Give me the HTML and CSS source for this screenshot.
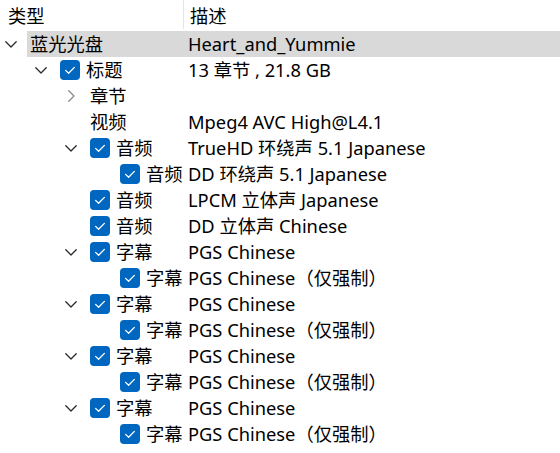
FILE: index.html
```html
<!DOCTYPE html>
<html lang="zh-CN">
<head>
<meta charset="utf-8">
<title>Tree</title>
<link rel="stylesheet" href="styles.css">
</head>
<body>
<div class="tree">
  <div class="header">
    <div class="hcell hname">类型</div>
    <div class="hcell hdesc">描述</div>
  </div>

  <div class="row selected">
    <div class="name lvl0"><span class="exp"><svg class="down" viewBox="0 0 12 7"><path d="M0.8 0.8 L6 6 L11.2 0.8"/></svg></span><span class="label">蓝光光盘</span></div>
    <div class="desc">Heart_and_Yummie</div>
  </div>
  <div class="row">
    <div class="name lvl1"><span class="exp"><svg class="down" viewBox="0 0 12 7"><path d="M0.8 0.8 L6 6 L11.2 0.8"/></svg></span><span class="cb"><svg viewBox="0 0 20 20"><path d="M5.6 10.4 L8.6 13.3 L14.4 7.4"/></svg></span><span class="label">标题</span></div>
    <div class="desc">13 章节 , 21.8 GB</div>
  </div>
  <div class="row">
    <div class="name lvl2"><span class="exp"><svg class="right" viewBox="0 0 7 12"><path d="M0.8 0.8 L6 6 L0.8 11.2"/></svg></span><span class="label">章节</span></div>
    <div class="desc"></div>
  </div>
  <div class="row">
    <div class="name lvl2"><span class="exp"></span><span class="label">视频</span></div>
    <div class="desc">Mpeg4 AVC High@L4.1</div>
  </div>
  <div class="row">
    <div class="name lvl2"><span class="exp"><svg class="down" viewBox="0 0 12 7"><path d="M0.8 0.8 L6 6 L11.2 0.8"/></svg></span><span class="cb"><svg viewBox="0 0 20 20"><path d="M5.6 10.4 L8.6 13.3 L14.4 7.4"/></svg></span><span class="label">音频</span></div>
    <div class="desc">TrueHD 环绕声 5.1 Japanese</div>
  </div>
  <div class="row">
    <div class="name lvl3"><span class="exp"></span><span class="cb"><svg viewBox="0 0 20 20"><path d="M5.6 10.4 L8.6 13.3 L14.4 7.4"/></svg></span><span class="label">音频</span></div>
    <div class="desc">DD 环绕声 5.1 Japanese</div>
  </div>
  <div class="row">
    <div class="name lvl2"><span class="exp"></span><span class="cb"><svg viewBox="0 0 20 20"><path d="M5.6 10.4 L8.6 13.3 L14.4 7.4"/></svg></span><span class="label">音频</span></div>
    <div class="desc">LPCM 立体声 Japanese</div>
  </div>
  <div class="row">
    <div class="name lvl2"><span class="exp"></span><span class="cb"><svg viewBox="0 0 20 20"><path d="M5.6 10.4 L8.6 13.3 L14.4 7.4"/></svg></span><span class="label">音频</span></div>
    <div class="desc">DD 立体声 Chinese</div>
  </div>

  <div class="row">
    <div class="name lvl2"><span class="exp"><svg class="down" viewBox="0 0 12 7"><path d="M0.8 0.8 L6 6 L11.2 0.8"/></svg></span><span class="cb"><svg viewBox="0 0 20 20"><path d="M5.6 10.4 L8.6 13.3 L14.4 7.4"/></svg></span><span class="label">字幕</span></div>
    <div class="desc">PGS Chinese</div>
  </div>
  <div class="row">
    <div class="name lvl3"><span class="exp"></span><span class="cb"><svg viewBox="0 0 20 20"><path d="M5.6 10.4 L8.6 13.3 L14.4 7.4"/></svg></span><span class="label">字幕</span></div>
    <div class="desc">PGS Chinese（仅强制）</div>
  </div>
  <div class="row">
    <div class="name lvl2"><span class="exp"><svg class="down" viewBox="0 0 12 7"><path d="M0.8 0.8 L6 6 L11.2 0.8"/></svg></span><span class="cb"><svg viewBox="0 0 20 20"><path d="M5.6 10.4 L8.6 13.3 L14.4 7.4"/></svg></span><span class="label">字幕</span></div>
    <div class="desc">PGS Chinese</div>
  </div>
  <div class="row">
    <div class="name lvl3"><span class="exp"></span><span class="cb"><svg viewBox="0 0 20 20"><path d="M5.6 10.4 L8.6 13.3 L14.4 7.4"/></svg></span><span class="label">字幕</span></div>
    <div class="desc">PGS Chinese（仅强制）</div>
  </div>
  <div class="row">
    <div class="name lvl2"><span class="exp"><svg class="down" viewBox="0 0 12 7"><path d="M0.8 0.8 L6 6 L11.2 0.8"/></svg></span><span class="cb"><svg viewBox="0 0 20 20"><path d="M5.6 10.4 L8.6 13.3 L14.4 7.4"/></svg></span><span class="label">字幕</span></div>
    <div class="desc">PGS Chinese</div>
  </div>
  <div class="row">
    <div class="name lvl3"><span class="exp"></span><span class="cb"><svg viewBox="0 0 20 20"><path d="M5.6 10.4 L8.6 13.3 L14.4 7.4"/></svg></span><span class="label">字幕</span></div>
    <div class="desc">PGS Chinese（仅强制）</div>
  </div>
  <div class="row">
    <div class="name lvl2"><span class="exp"><svg class="down" viewBox="0 0 12 7"><path d="M0.8 0.8 L6 6 L11.2 0.8"/></svg></span><span class="cb"><svg viewBox="0 0 20 20"><path d="M5.6 10.4 L8.6 13.3 L14.4 7.4"/></svg></span><span class="label">字幕</span></div>
    <div class="desc">PGS Chinese</div>
  </div>
  <div class="row">
    <div class="name lvl3"><span class="exp"></span><span class="cb"><svg viewBox="0 0 20 20"><path d="M5.6 10.4 L8.6 13.3 L14.4 7.4"/></svg></span><span class="label">字幕</span></div>
    <div class="desc">PGS Chinese（仅强制）</div>
  </div>
</div>
</body>
</html>
```

FILE: styles.css
```css
html, body {
  margin: 0;
  padding: 0;
  background: #ffffff;
}

body {
  width: 560px;
  height: 453px;
  overflow: hidden;
  font-family: "Noto Sans", "Noto Sans CJK SC", sans-serif;
  font-size: 18.3px;
  color: #000000;
}

.tree {
  display: flex;
  flex-direction: column;
}

.header {
  display: flex;
  height: 31px;
}

.hcell {
  display: flex;
  align-items: center;
  height: 29px;
  white-space: nowrap;
}

.hname {
  width: 184px;
  box-sizing: border-box;
  padding-left: 8px;
  border-right: 1px solid #e5e5e5;
}

.hdesc {
  padding-left: 6px;
}

.row {
  display: flex;
  height: 26px;
  align-items: center;
  white-space: nowrap;
}

.row.selected {
  background: linear-gradient(to right, transparent 27px, #d9d9d9 27px);
}

.name {
  width: 184px;
  flex: none;
  box-sizing: border-box;
  display: flex;
  align-items: center;
  height: 100%;
  overflow: hidden;
}

.lvl0 { padding-left: 0; }
.lvl1 { padding-left: 30px; }
.lvl2 { padding-left: 60px; }
.lvl3 { padding-left: 90px; }

.exp {
  width: 30px;
  flex: none;
  display: flex;
  align-items: center;
  padding-left: 5px;
  box-sizing: border-box;
}

.exp svg {
  fill: none;
  stroke-linecap: round;
  stroke-linejoin: round;
}

.exp .down {
  width: 12px;
  height: 7px;
  stroke: #2b2b2b;
  stroke-width: 1.3;
}

.exp .right {
  width: 7px;
  height: 12px;
  margin-left: 3px;
  stroke: #8a8a8a;
  stroke-width: 1.3;
}

.cb {
  width: 20px;
  height: 20px;
  flex: none;
  border-radius: 4px;
  background: #0067c0;
  margin-right: 6px;
  display: flex;
}

.cb svg {
  width: 20px;
  height: 20px;
  fill: none;
  stroke: #ffffff;
  stroke-width: 1.3;
  stroke-linecap: round;
  stroke-linejoin: round;
}

.label {
  line-height: 26px;
}

.desc {
  flex: 1;
  padding-left: 4px;
  line-height: 26px;
}
```
